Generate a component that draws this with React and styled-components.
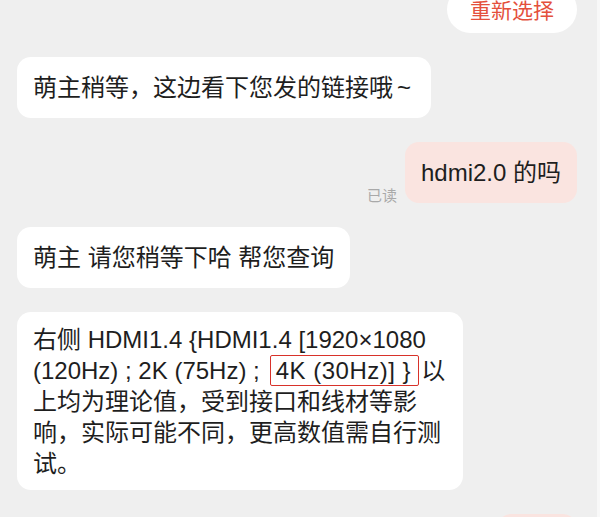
import React from "react";
import styled, { createGlobalStyle } from "styled-components";

const Global = createGlobalStyle`
  html, body { margin: 0; padding: 0; background: #efefef; }
  body { overflow: hidden; }
`;

const Page = styled.div`
  width: 597px;
  height: 517px;
  overflow: hidden;
  background: #efefef;
  border-right: 3px solid #f8f8f8;
  font-family: "Liberation Sans", "Noto Sans CJK SC", sans-serif;
  color: #1e1e1e;
`;

const Thread = styled.div`
  display: flex;
  flex-direction: column;
  gap: 24px;
  padding: 0 20px 0 17px;
  margin-top: -14px;
`;

const Row = styled.div`
  display: flex;
  justify-content: ${(p) => (p.$mine ? "flex-end" : "flex-start")};
  align-items: flex-end;
  gap: 8px;
`;

const Bubble = styled.div`
  background: ${(p) => (p.$mine ? "#fae4e0" : "#ffffff")};
  border-radius: 14px;
  font-size: 24px;
  line-height: 31px;
  padding: ${(p) => p.$pad || "15px 16px"};
  white-space: nowrap;
`;

const Tilde = styled.span`
  margin-left: 4px;
`;

const ActionPill = styled.div`
  background: #ffffff;
  border-radius: 24px;
  padding: 8px 23px;
  font-size: 21px;
  line-height: 31px;
  color: #e4503c;
  font-family: "Noto Sans CJK SC", sans-serif;
`;

const ReadMark = styled.span`
  font-size: 15px;
  line-height: 20px;
  color: #a9a9a9;
  font-family: "Noto Sans CJK SC", sans-serif;
  margin-bottom: -2px;
`;

const Highlight = styled.span`
  border: 1.5px solid #d8322a;
  border-radius: 2px;
  padding: 1px 7px 1px 5px;
  margin-left: 10px;
  margin-right: 2px;
  letter-spacing: 0.5px;
`;

export default function App() {
  return (
    <Page>
      <Global />
      <Thread>
        <Row $mine>
          <ActionPill>重新选择</ActionPill>
        </Row>
        <Row>
          <Bubble $pad="15px 20px 15px 16px">
            萌主稍等，这边看下您发的链接哦<Tilde>~</Tilde>
          </Bubble>
        </Row>
        <Row $mine>
          <ReadMark>已读</ReadMark>
          <Bubble $mine>hdmi2.0 的吗</Bubble>
        </Row>
        <Row>
          <Bubble>萌主 请您稍等下哈 帮您查询</Bubble>
        </Row>
        <Row>
          <Bubble $pad="12px 18px 11px 16px">
            右侧 HDMI1.4 {"{"}HDMI1.4 [1920×1080
            <br />
            (120Hz) ; 2K (75Hz) ;<Highlight>4K (30Hz)] {"}"}</Highlight>以
            <br />
            上均为理论值，受到接口和线材等影
            <br />
            响，实际可能不同，更高数值需自行测
            <br />
            试。
          </Bubble>
        </Row>
        <Row $mine>
          <Bubble $mine>好的</Bubble>
        </Row>
      </Thread>
    </Page>
  );
}
